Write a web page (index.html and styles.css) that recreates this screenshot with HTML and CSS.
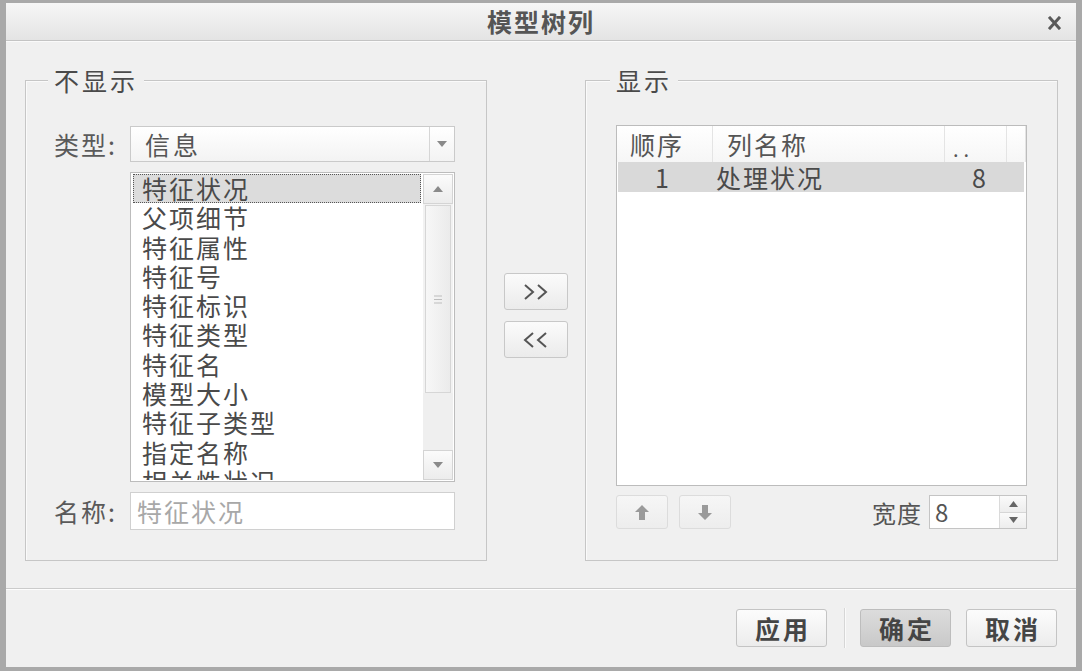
FILE: index.html
```html
<!DOCTYPE html>
<html lang="zh-CN">
<head>
<meta charset="UTF-8">
<meta name="viewport" content="width=device-width, initial-scale=1.0">
<title>模型树列</title>
<link rel="stylesheet" href="styles.css">
</head>
<body>
<div class="dialog">
    <div class="titlebar">
        <span></span>
        <span class="title">模型树列</span>
        <span class="close">
            <svg width="13" height="14" viewBox="0 0 13 14"><path d="M2 2 L11 12 M11 2 L2 12" stroke="#5a5a5a" stroke-width="3" stroke-linecap="square"/></svg>
        </span>
    </div>

    <div class="main">
        <!-- hidden columns -->
        <div class="group group-left">
            <div class="group-title">不显示</div>
            <div class="form">
                <label class="label">类型:</label>
                <div class="select">
                    <span class="select-text">信息</span>
                    <span class="select-arrow">
                        <svg width="10" height="6" viewBox="0 0 10 6"><path d="M0 0 H10 L5 6 Z" fill="#8a8a8a"/></svg>
                    </span>
                </div>

                <span></span>
                <div class="listbox">
                    <div class="list-items">
                        <div class="item selected">特征状况</div>
                        <div class="item">父项细节</div>
                        <div class="item">特征属性</div>
                        <div class="item">特征号</div>
                        <div class="item">特征标识</div>
                        <div class="item">特征类型</div>
                        <div class="item">特征名</div>
                        <div class="item">模型大小</div>
                        <div class="item">特征子类型</div>
                        <div class="item">指定名称</div>
                        <div class="item">相关性状况</div>
                    </div>
                    <div class="scrollbar">
                        <div class="sb-btn">
                            <svg width="10" height="6" viewBox="0 0 10 6"><path d="M0 6 H10 L5 0 Z" fill="#8a8a8a"/></svg>
                        </div>
                        <div class="sb-thumb">
                            <svg width="8" height="9" viewBox="0 0 8 9"><path d="M0 1 H8 M0 4.5 H8 M0 8 H8" stroke="#bdbdbd" stroke-width="1"/></svg>
                        </div>
                        <div class="sb-track"></div>
                        <div class="sb-btn">
                            <svg width="10" height="6" viewBox="0 0 10 6"><path d="M0 0 H10 L5 6 Z" fill="#8a8a8a"/></svg>
                        </div>
                    </div>
                </div>

                <label class="label">名称:</label>
                <input class="name-input" type="text" placeholder="特征状况">
            </div>
        </div>

        <!-- move buttons -->
        <div class="mid">
            <button class="move-btn">
                <svg width="26" height="16" viewBox="0 0 26 16"><path d="M2 1 L10 8 L2 15 M15 1 L23 8 L15 15" fill="none" stroke="#555" stroke-width="2"/></svg>
            </button>
            <button class="move-btn">
                <svg width="26" height="16" viewBox="0 0 26 16"><path d="M10 1 L2 8 L10 15 M23 1 L15 8 L23 15" fill="none" stroke="#555" stroke-width="2"/></svg>
            </button>
        </div>

        <!-- shown columns -->
        <div class="group group-right">
            <div class="group-title">显示</div>
            <div class="table">
                <div class="thead">
                    <div class="th col-order">顺序</div>
                    <div class="th col-name">列名称</div>
                    <div class="th col-width"><span class="dots">..</span></div>
                    <div class="th col-rest"></div>
                </div>
                <div class="tr selected-row">
                    <div class="td col-order center">1</div>
                    <div class="td col-name">处理状况</div>
                    <div class="td col-width right">8</div>
                </div>
            </div>
            <div class="table-tools">
                <button class="arrow-btn">
                    <svg width="14" height="15" viewBox="0 0 14 15"><path d="M7 0 L14 7 H10 V15 H4 V7 H0 Z" fill="#9a9a9a"/></svg>
                </button>
                <button class="arrow-btn">
                    <svg width="14" height="15" viewBox="0 0 14 15"><path d="M7 15 L14 8 H10 V0 H4 V8 H0 Z" fill="#9a9a9a"/></svg>
                </button>
                <span class="spacer"></span>
                <span class="width-label">宽度</span>
                <div class="spin">
                    <span class="spin-value">8</span>
                    <span class="spin-btns">
                        <span class="spin-btn"><svg width="9" height="6" viewBox="0 0 9 6"><path d="M0 6 H9 L4.5 0 Z" fill="#666"/></svg></span>
                        <span class="spin-btn"><svg width="9" height="6" viewBox="0 0 9 6"><path d="M0 0 H9 L4.5 6 Z" fill="#666"/></svg></span>
                    </span>
                </div>
            </div>
        </div>
    </div>

    <div class="footer">
        <button class="btn">应用</button>
        <span class="sep"></span>
        <button class="btn btn-default">确定</button>
        <button class="btn">取消</button>
    </div>
</div>
</body>
</html>
```

FILE: styles.css
```css
/* Model tree columns dialog */
body {
    margin: 0;
    padding: 0;
    height: 671px;
    overflow: hidden;
    background-color: #a9a9a9;
    font-family: "Noto Sans CJK SC", "Noto Sans", sans-serif;
    color: #505050;
}
.dialog {
    margin: 3px 6px 0;
    height: 664px;
    background-color: #f0f0f0;
    display: flex;
    flex-direction: column;
}
.titlebar {
    height: 37px;
    flex: none;
    display: grid;
    grid-template-columns: 1fr auto 1fr;
    align-items: center;
    background: linear-gradient(#f6f6f6, #e4e4e4);
    border-bottom: 1px solid #c4c4c4;
}
.title {
    font-size: 25px;
    font-weight: bold;
    letter-spacing: 2px;
    color: #555;
    line-height: 37px;
}
.close {
    justify-self: end;
    padding-right: 15px;
    display: flex;
    margin-top: 2px;
}
.main {
    height: 547px;
    flex: none;
    display: flex;
    padding: 0 18px 0 19px;
    box-sizing: border-box;
    border-top: 1px solid #fafafa;
}
.group {
    margin-top: 38px;
    height: 481px;
    box-sizing: border-box;
    border: 1px solid #c6c6c6;
    box-shadow: inset 1px 1px 0 #fafafa;
}
.group-left {
    width: 462px;
    padding: 0 30px 0 28px;
}
.group-right {
    width: 473px;
    padding: 0 30px;
}
.group-title {
    display: block;
    width: fit-content;
    margin: -16px 0 0 -6px;
    padding: 0 6px;
    background-color: #f0f0f0;
    font-size: 25px;
    line-height: 30px;
    letter-spacing: 3px;
    color: #4a4a4a;
}
.form {
    margin-top: 31px;
    display: grid;
    grid-template-columns: 76px 325px;
    grid-template-rows: 36px 310px 38px;
    row-gap: 10px;
}
.label {
    font-size: 25px;
    letter-spacing: 2px;
    color: #5a5a5a;
    line-height: 36px;
    align-self: center;
    white-space: nowrap;
}
.select {
    display: flex;
    border: 1px solid #cacaca;
    background: linear-gradient(#ffffff, #f3f3f3);
}
.select-text {
    flex: 1;
    padding-left: 14px;
    font-size: 25px;
    letter-spacing: 3px;
    line-height: 34px;
    color: #555;
}
.select-arrow {
    width: 24px;
    border-left: 1px solid #d6d6d6;
    display: flex;
    align-items: center;
    justify-content: center;
}
.listbox {
    display: flex;
    border: 1px solid #bcbcbc;
    background-color: #fff;
    padding: 1px 1px 1px 2px;
    overflow: hidden;
}
.list-items {
    flex: 1;
    overflow: hidden;
    margin-right: 2px;
}
.item {
    height: 29.3px;
    line-height: 29px;
    padding-left: 9px;
    font-size: 25px;
    letter-spacing: 2px;
    color: #4a4a4a;
    white-space: nowrap;
    box-sizing: border-box;
}
.item.selected {
    background-color: #dcdcdc;
    outline: 1px dotted #555;
    outline-offset: -1px;
}
.scrollbar {
    width: 30px;
    display: flex;
    flex-direction: column;
    background-color: #f2f2f2;
}
.sb-btn {
    height: 28px;
    flex: none;
    border: 1px solid #d4d4d4;
    background: linear-gradient(#fbfbfb, #ececec);
    display: flex;
    align-items: center;
    justify-content: center;
}
.sb-thumb {
    height: 186px;
    flex: none;
    margin: 1px 2px 0;
    border: 1px solid #d6d6d6;
    background: linear-gradient(90deg, #f7f7f7, #ebebeb);
    display: flex;
    align-items: center;
    justify-content: center;
}
.sb-track {
    flex: 1;
    background-color: #efefef;
}
.name-input {
    margin: 0;
    padding: 0 0 0 6px;
    border: 1px solid #d0d0d0;
    background-color: #fff;
    font-family: inherit;
    font-size: 25px;
    letter-spacing: 2px;
    color: #555;
    outline: none;
}
.name-input::placeholder {
    color: #a8a8a8;
}
.mid {
    width: 98px;
    padding-top: 231px;
    display: flex;
    flex-direction: column;
    align-items: center;
    gap: 11px;
}
.move-btn {
    width: 64px;
    height: 37px;
    padding: 0;
    border: 1px solid #c8c8c8;
    border-radius: 3px;
    background: linear-gradient(#fbfbfb, #ebebeb);
    display: flex;
    align-items: center;
    justify-content: center;
}
.table {
    margin-top: 30px;
    height: 361px;
    box-sizing: border-box;
    border: 1px solid #bcbcbc;
    background-color: #fff;
}
.thead {
    display: flex;
    height: 36px;
    background: linear-gradient(#ffffff, #f6f6f6);
}
.th {
    font-size: 25px;
    letter-spacing: 2px;
    color: #555;
    line-height: 36px;
    border-right: 1px solid #e4e4e4;
    box-sizing: border-box;
}
.col-order {
    width: 96px;
    padding-left: 13px;
    box-sizing: border-box;
}
.col-name {
    width: 232px;
    padding-left: 14px;
    box-sizing: border-box;
}
.col-width {
    width: 62px;
    box-sizing: border-box;
}
.col-rest {
    flex: 1;
}
.dots {
    display: block;
    padding-left: 8px;
    line-height: 46px;
    font-size: 20px;
    letter-spacing: 5px;
}
.tr {
    display: flex;
    height: 30px;
}
.selected-row {
    background-color: #d9d9d9;
    margin: 0 2px 0 1px;
}
.td {
    font-size: 25px;
    letter-spacing: 2px;
    color: #4a4a4a;
    line-height: 30px;
}
.tr .col-order {
    width: 90px;
}
.tr .col-name {
    padding-left: 8px;
}
.center {
    text-align: center;
    padding-left: 0;
}
.right {
    text-align: right;
    padding-right: 14px;
}
.table-tools {
    margin-top: 9px;
    height: 34px;
    display: flex;
    align-items: center;
}
.arrow-btn {
    width: 52px;
    height: 34px;
    margin-right: 11px;
    padding: 0;
    border: 1px solid #dcdcdc;
    border-radius: 3px;
    background: linear-gradient(#f6f6f6, #ededed);
    display: flex;
    align-items: center;
    justify-content: center;
}
.spacer {
    flex: 1;
}
.width-label {
    font-size: 24px;
    letter-spacing: 1px;
    color: #555;
    margin-right: 7px;
}
.spin {
    width: 98px;
    height: 34px;
    box-sizing: border-box;
    border: 1px solid #c4c4c4;
    background-color: #fff;
    display: flex;
}
.spin-value {
    flex: 1;
    padding-left: 5px;
    font-size: 24px;
    line-height: 32px;
    color: #555;
}
.spin-btns {
    width: 26px;
    display: flex;
    flex-direction: column;
    border-left: 1px solid #dadada;
}
.spin-btn {
    flex: 1;
    display: flex;
    align-items: center;
    justify-content: center;
    background: linear-gradient(#fafafa, #ededed);
}
.spin-btn + .spin-btn {
    border-top: 1px solid #d6d6d6;
}
.footer {
    flex: 1;
    box-sizing: border-box;
    border-top: 1px solid #cbcbcb;
    box-shadow: inset 0 1px 0 #fdfdfd;
    display: flex;
    justify-content: flex-end;
    align-items: flex-start;
    padding: 20px 19px 0 0;
}
.btn {
    width: 91px;
    height: 38px;
    margin-left: 15px;
    padding: 0 0 0 3px;
    border: 1px solid #c4c4c4;
    border-radius: 3px;
    background: linear-gradient(#fcfcfc, #ececec);
    font-family: inherit;
    font-size: 25px;
    font-weight: bold;
    letter-spacing: 3px;
    color: #454545;
}
.btn-default {
    background: linear-gradient(#dcdcdc, #c9c9c9);
    border-color: #bdbdbd;
}
.sep {
    width: 1px;
    height: 40px;
    margin: -1px 0 0 17px;
    background-color: #d6d6d6;
    box-shadow: 1px 0 0 #fafafa;
}
.sep + .btn {
    margin-left: 15px;
}
```
